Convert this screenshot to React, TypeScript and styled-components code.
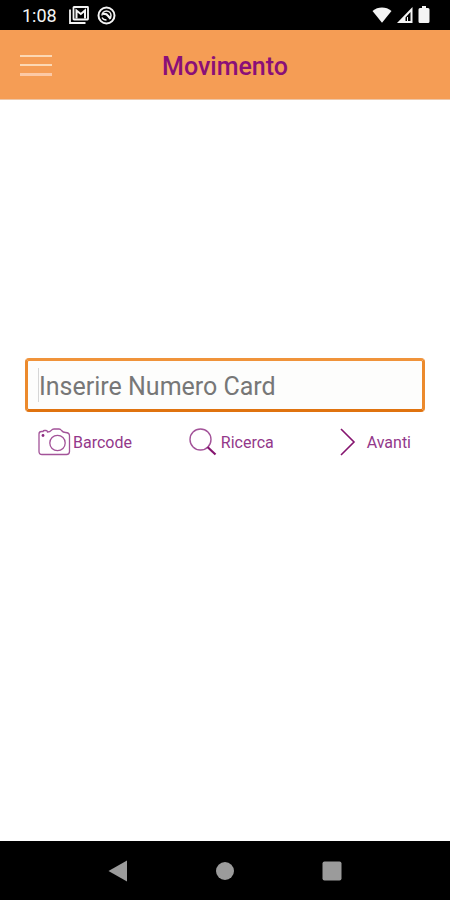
import React from "react";
import styled, { createGlobalStyle } from "styled-components";

const GlobalStyle = createGlobalStyle`
  * { box-sizing: border-box; }
  body { margin: 0; background: #fff; font-family: Roboto, "Liberation Sans", sans-serif; }
  button, input { font: inherit; }
`;

const Screen = styled.div`
  display: flex;
  flex-direction: column;
  min-height: 100vh;
`;

const StatusBar = styled.div`
  display: flex;
  align-items: center;
  justify-content: space-between;
  height: 30px;
  padding: 0 20px 0 22px;
  background: #000;
  color: #f4f4f4;
`;

const StatusGroup = styled.div<{ $gap: number }>`
  display: flex;
  align-items: center;
  gap: ${(p) => p.$gap}px;

  svg { display: block; }
`;

const Clock = styled.span`
  margin-right: 4px;
  padding-top: 2px;
  font-size: 18px;
  line-height: 28px;
`;

const Header = styled.header`
  display: grid;
  grid-template-columns: 32px 1fr 32px;
  align-items: center;
  height: 70px;
  padding: 0 20px;
  background: #f59d55;
  border-bottom: 1px solid #eec7a8;
`;

const Title = styled.h1`
  margin: 0;
  padding-top: 4px;
  color: #8a0f78;
  font-size: 25px;
  font-weight: 500;
  line-height: 32px;
  text-align: center;
`;

const IconButton = styled.button`
  display: flex;
  padding: 0;
  border: 0;
  background: none;
  cursor: pointer;
`;

const Main = styled.main`
  flex: 1;
  padding: 258px 25px 24px;
`;

const Field = styled.label`
  display: flex;
  align-items: center;
  height: 54px;
  padding: 0 10px;
  border: 3px solid;
  border-color: #f0933a #ec8a2c #e0730f;
  border-radius: 4px;
  background: #fdfdfc;
`;

const Caret = styled.span`
  flex: none;
  width: 1px;
  height: 34px;
  background: #d6d6d6;
`;

const CardInput = styled.input`
  flex: 1;
  min-width: 0;
  height: 42px;
  padding: 2px 0 0;
  border: 0;
  outline: 0;
  background: transparent;
  color: #444;
  font-size: 25px;

  &::placeholder { color: #777; opacity: 1; }
`;

const Actions = styled.div`
  display: grid;
  grid-template-columns: 1fr 1fr auto;
  justify-items: start;
  padding: 14px 14px 0 13px;
`;

const Action = styled.button<{ $gap: number }>`
  display: flex;
  align-items: center;
  gap: ${(p) => p.$gap}px;
  height: 32px;
  padding: 0;
  border: 0;
  background: none;
  color: #93388a;
  font-size: 16px;
  line-height: 20px;
  cursor: pointer;

  svg { display: block; flex: none; }
`;

const ActionLabel = styled.span`
  padding-top: 2px;
`;

const NavBar = styled.nav`
  display: flex;
  align-items: center;
  justify-content: space-around;
  height: 59px;
  padding: 0 65px;
  background: #000;
`;

const MailIcon = () => (
  <svg width="20" height="18" viewBox="0 0 20 18" fill="none" stroke="currentColor" aria-hidden="true">
    <path d="M1 3.500V17h15.500" strokeWidth="1.8" />
    <rect x="4.500" y="1" width="14.500" height="12.500" rx="0.500" strokeWidth="1.8" />
    <path d="M7.500 12.500V4.500l4.300 3.500L16 4.500v8" strokeWidth="2" />
  </svg>
);

const SwirlIcon = () => (
  <svg width="19" height="19" viewBox="0 0 19 19" fill="none" stroke="currentColor" aria-hidden="true">
    <circle cx="9.500" cy="9.500" r="8" strokeWidth="2" />
    <path d="M5 9.500a4.500 4.500 0 0 1 9 0c0 1.300-.5 2.500-1.500 3.300" strokeWidth="1.500" />
    <path d="M6 8c2.500-.5 4 .3 5 1.800l2.500 3" strokeWidth="2.200" />
    <path d="M5 11.500c.8 1.700 2.300 2.500 4.500 2.500" strokeWidth="1.300" />
  </svg>
);

const WifiIcon = () => (
  <svg width="20" height="16" viewBox="0 0 20 16" fill="currentColor" aria-hidden="true">
    <path d="M.5 4C6-.6 14-.6 19.500 4L10 15.700z" />
  </svg>
);

const SignalIcon = () => (
  <svg width="16" height="16" viewBox="0 0 16 16" aria-hidden="true">
    <path fill="currentColor" fillRule="evenodd" d="M15.500 0v16H0zM13.500 5L8.500 10.500V14h5z" />
    <path d="M10.500 10v4" stroke="currentColor" />
  </svg>
);

const BatteryIcon = () => (
  <svg width="12" height="18" viewBox="0 0 12 18" fill="currentColor" aria-hidden="true">
    <path d="M4 0h4v2h2q1.500 0 1.500 1.500v12q0 1.500-1.500 1.500H2Q.5 17 .5 15.500v-12Q.5 2 2 2h2z" />
  </svg>
);

const MenuIcon = () => (
  <svg width="32" height="22" viewBox="0 0 32 22" stroke="#fcd8b4" strokeWidth="2" aria-hidden="true">
    <path d="M0 2h32M0 11h32" />
    <path d="M0 20.500h32" stroke="#fcc9a5" strokeWidth="3" />
  </svg>
);

const CameraIcon = () => (
  <svg width="33" height="28" viewBox="0 0 33 28" fill="none" stroke="#a35399" strokeWidth="1.3" aria-hidden="true">
    <path d="M4 26.500Q1 26.500 1 23.500V6Q1 3.500 3.500 3.500H5Q5.300 2.500 6.500 2.500H8Q9.300 2.500 9.500 4q2.500 0 3.800-1.700Q14.300 1 16 1h5q1.500 0 2.500 1.500Q25 4.500 27.500 4.500 31.500 4.500 31.500 8v15.500q0 3-3 3z" />
    <circle cx="19.500" cy="15" r="7.700" />
    <circle cx="5" cy="7.500" r="1.400" fill="#8c2a80" stroke="none" />
  </svg>
);

const SearchIcon = () => (
  <svg width="28" height="28" viewBox="0 0 28 28" fill="none" aria-hidden="true">
    <circle cx="11.500" cy="11.500" r="10.500" stroke="#a35399" strokeWidth="1.400" />
    <path d="M18.500 19l8 7.500" stroke="#85146f" strokeWidth="2.200" />
  </svg>
);

const ChevronIcon = () => (
  <svg width="16" height="28" viewBox="0 0 16 28" fill="none" stroke="#85146f" strokeWidth="1.600" aria-hidden="true">
    <path d="M1 1l13 13L1 27" />
  </svg>
);

const BackIcon = () => (
  <svg width="20" height="22" viewBox="0 0 20 22" fill="#9b9b9b" aria-hidden="true">
    <path d="M19 .5v21L.5 11z" />
  </svg>
);

const HomeIcon = () => (
  <svg width="20" height="20" viewBox="0 0 20 20" fill="#9b9b9b" aria-hidden="true">
    <circle cx="10" cy="10" r="9" />
  </svg>
);

const RecentsIcon = () => (
  <svg width="20" height="20" viewBox="0 0 20 20" fill="#9b9b9b" aria-hidden="true">
    <rect x="0.500" y="0.500" width="19" height="19" rx="2" />
  </svg>
);

export default function App() {
  return (
    <Screen>
      <GlobalStyle />
      <StatusBar>
        <StatusGroup $gap={8}>
          <Clock>1:08</Clock>
          <MailIcon />
          <SwirlIcon />
        </StatusGroup>
        <StatusGroup $gap={5}>
          <WifiIcon />
          <SignalIcon />
          <BatteryIcon />
        </StatusGroup>
      </StatusBar>
      <Header>
        <IconButton type="button" aria-label="Menu"><MenuIcon /></IconButton>
        <Title>Movimento</Title>
      </Header>
      <Main>
        <Field>
          <Caret />
          <CardInput type="text" placeholder="Inserire Numero Card" aria-label="Inserire Numero Card" />
        </Field>
        <Actions>
          <Action type="button" $gap={2}><CameraIcon /><ActionLabel>Barcode</ActionLabel></Action>
          <Action type="button" $gap={4}><SearchIcon /><ActionLabel>Ricerca</ActionLabel></Action>
          <Action type="button" $gap={11}><ChevronIcon /><ActionLabel>Avanti</ActionLabel></Action>
        </Actions>
      </Main>
      <NavBar>
        <IconButton type="button" aria-label="Back"><BackIcon /></IconButton>
        <IconButton type="button" aria-label="Home"><HomeIcon /></IconButton>
        <IconButton type="button" aria-label="Recents"><RecentsIcon /></IconButton>
      </NavBar>
    </Screen>
  );
}
